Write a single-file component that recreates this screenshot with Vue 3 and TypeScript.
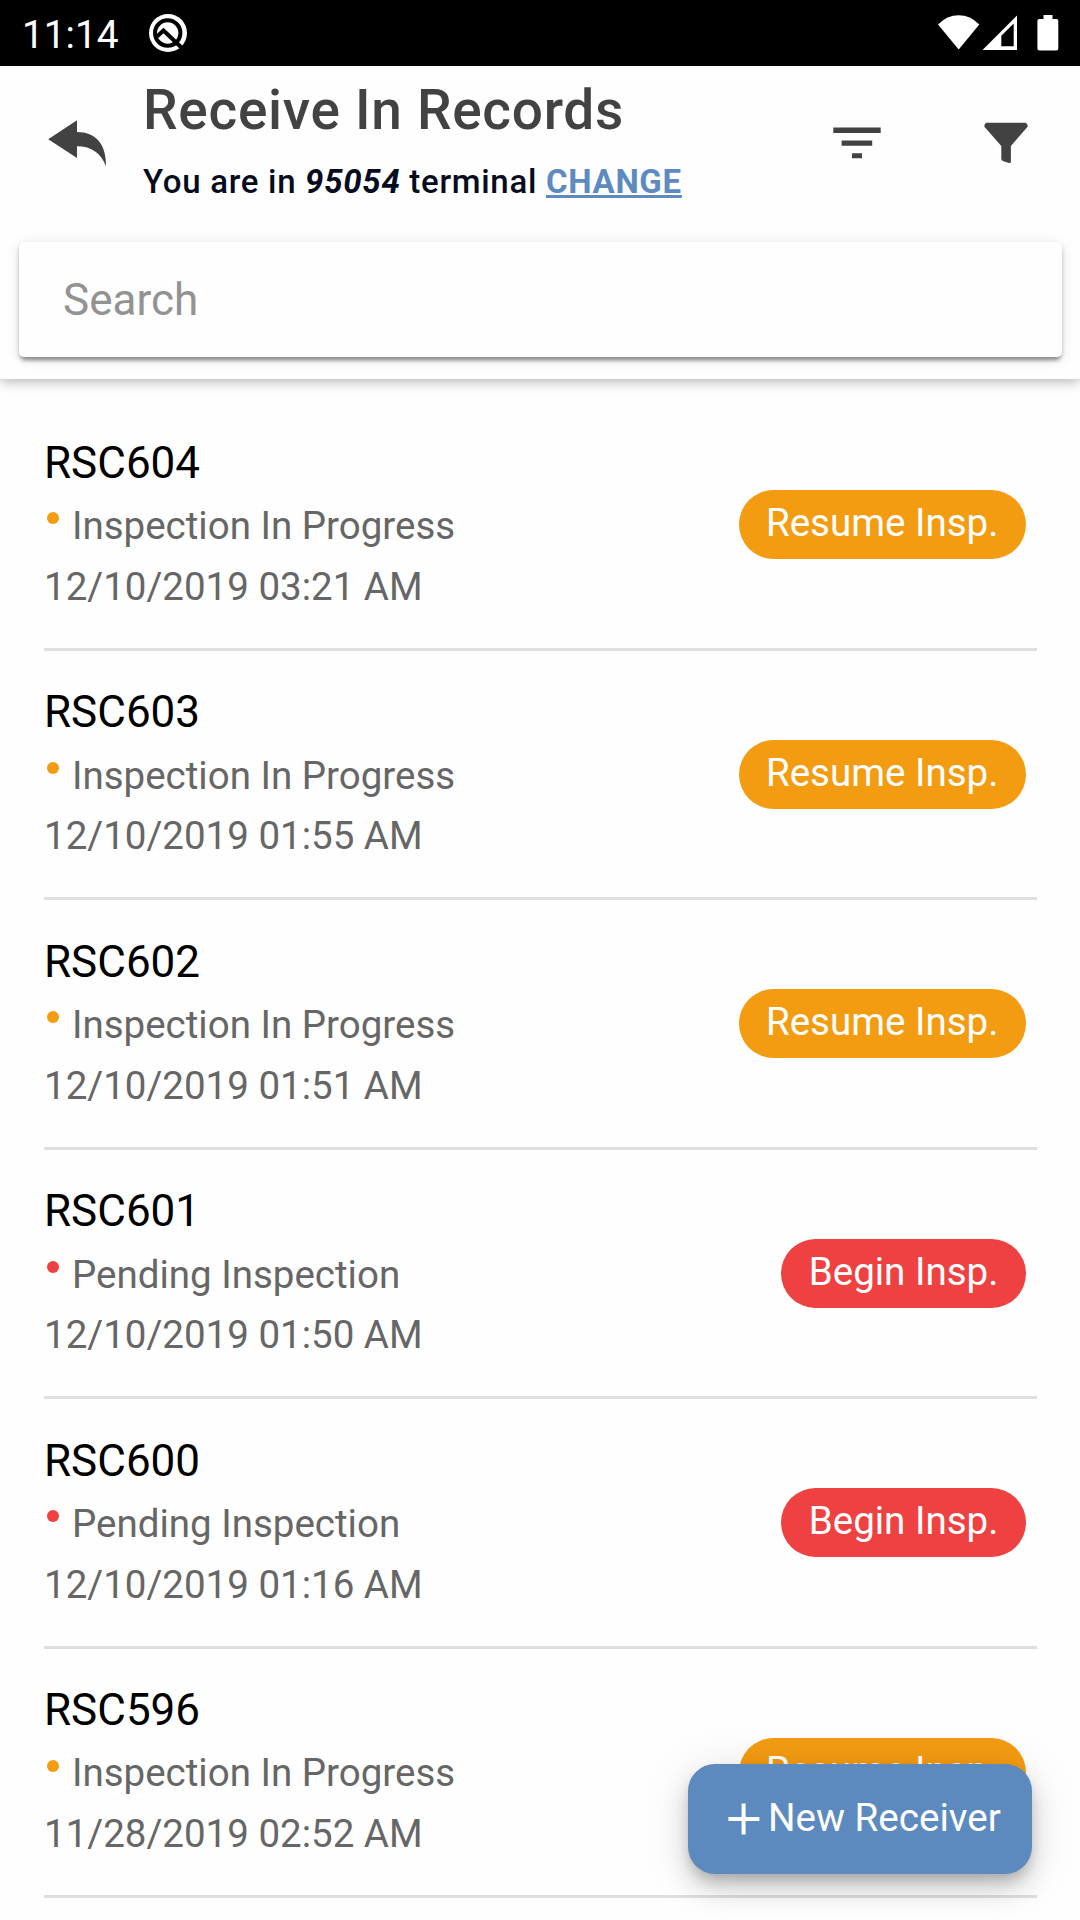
<script setup lang="ts">
interface ReceiveRecord {
  id: string
  pending: boolean
  date: string
}

const records: ReceiveRecord[] = [
  { id: 'RSC604', pending: false, date: '12/10/2019 03:21 AM' },
  { id: 'RSC603', pending: false, date: '12/10/2019 01:55 AM' },
  { id: 'RSC602', pending: false, date: '12/10/2019 01:51 AM' },
  { id: 'RSC601', pending: true, date: '12/10/2019 01:50 AM' },
  { id: 'RSC600', pending: true, date: '12/10/2019 01:16 AM' },
  { id: 'RSC596', pending: false, date: '11/28/2019 02:52 AM' },
]
</script>

<template>
  <div class="screen">
    <div class="statusbar">
      <span class="clock">11:14</span>
      <svg class="q-icon" width="40" height="40" viewBox="0 0 40 40">
        <circle cx="20" cy="20" r="19" fill="#fff" />
        <circle cx="19.7" cy="20" r="12.7" fill="none" stroke="#000" stroke-width="4" />
        <path d="M9 23.500l6.500-6 19.500 18.500" fill="none" stroke="#000" stroke-width="4" />
      </svg>
      <span class="spacer"></span>
      <svg class="wifi" width="42" height="35" viewBox="0 0 42 35">
        <path d="M0 9.500Q9 .3 20.700 .3T41.300 9.500L20.700 34.500Z" fill="#fff" />
      </svg>
      <svg class="signal" width="36" height="36" viewBox="0 0 36 36">
        <path d="M35 .5V35H.5ZM31.700 8.500L19.300 20.800V31.300H31.700Z" fill="#fff" fill-rule="evenodd" />
      </svg>
      <svg class="battery" width="22" height="36" viewBox="0 0 22 36">
        <path d="M6.500 0h9v4H19.500Q21.300 4 21.300 6V33.500Q21.300 35.600 19.300 35.600H2.500Q.4 35.600.4 33.500V6Q.4 4 2.400 4H6.500Z" fill="#fff" />
      </svg>
    </div>

    <header class="header">
      <div class="toolbar">
        <svg class="back" width="60" height="48" viewBox="0 0 60 48">
          <path d="M.2 19.300L29 .3V12.100C47.700 12.100 58.300 24 58 46.200C53.200 33.500 43.700 26.300 29 26.300V38Z" fill="#424242" />
        </svg>
        <div class="titles">
          <h1 class="title">Receive In Records</h1>
          <p class="subtitle">You are in <em>95054</em> terminal <a class="change">CHANGE</a></p>
        </div>
        <svg class="sort" width="48" height="32" viewBox="0 0 48 32">
          <path d="M.3.600h47.400v5.300H.3ZM8.600 13.400h30.600v5.300H8.600ZM19 26.200h10v5H19Z" fill="#424242" />
        </svg>
        <svg class="funnel" width="44" height="42" viewBox="0 0 44 42">
          <path d="M2.500.7H41.500Q44 1.700 43.600 4.700L26.900 24V40.200Q26.500 41.200 25 40.900L18.800 38.900Q17.300 38.200 17.300 36.700V24L.4 4.700Q0 1.700 2.500.7Z" fill="#424242" />
        </svg>
      </div>
      <div class="search">Search</div>
    </header>

    <main class="list">
      <div v-for="r in records" :key="r.id" class="row">
        <div class="info">
          <div class="name">{{ r.id }}</div>
          <div class="status">
            <span class="dot" :class="{ red: r.pending }"></span>
            <span>{{ r.pending ? 'Pending Inspection' : 'Inspection In Progress' }}</span>
          </div>
          <div class="date">{{ r.date }}</div>
        </div>
        <div class="chip" :class="{ red: r.pending }">{{ r.pending ? 'Begin Insp.' : 'Resume Insp.' }}</div>
      </div>
    </main>

    <div class="fab">
      <svg width="32" height="32" viewBox="0 0 32 32">
        <path d="M13.600.5h4v13.600H31.400v4H17.600V31.500h-4V18.100H.4v-4H13.600Z" fill="#fff" />
      </svg>
      <span>New Receiver</span>
    </div>
  </div>
</template>

<style>
html,
body {
  margin: 0;
  background: #fefefe;
  overflow: hidden;
}
</style>

<style scoped>
.screen {
  position: relative;
  width: 1080px;
  height: 1920px;
  overflow: hidden;
  background: #fefefe;
  font-family: Roboto, 'Liberation Sans', sans-serif;
  white-space: nowrap;
}
.statusbar {
  height: 66px;
  box-sizing: border-box;
  padding: 0 21px 0 22px;
  background: #000;
  color: #fff;
  display: flex;
  align-items: flex-start;
}
.clock {
  width: 126.300px;
  font-size: 38.800px;
  line-height: 70px;
}
.q-icon {
  margin-top: 13px;
}
.spacer {
  flex: 1;
}
.wifi {
  margin: 15px 2px 0 0;
}
.signal {
  margin: 15px 19px 0 0;
}
.battery {
  margin-top: 15px;
}
.header {
  position: relative;
  height: 313px;
  background: #fefefe;
  box-shadow: 0 2px 12px rgba(0, 0, 0, 0.32);
  clip-path: inset(0 0 -16px 0);
}
.toolbar {
  height: 176px;
  display: flex;
  align-items: flex-start;
}
.back {
  margin: 54px 0 0 48px;
}
.titles {
  width: 690px;
  margin-left: 35px;
}
.title {
  margin: 0;
  font-size: 55px;
  line-height: 88px;
  font-weight: 500;
  letter-spacing: 0.700px;
  color: #424242;
}
.subtitle {
  margin: 0;
  font-size: 33px;
  line-height: 56px;
  font-weight: 500;
  letter-spacing: 0.700px;
  color: #060c1e;
}
.subtitle em {
  font-weight: 700;
}
.change {
  color: #5d8abf;
  font-weight: 700;
  text-decoration: underline;
  text-decoration-thickness: 3px;
  text-underline-offset: 2px;
}
.sort {
  margin-top: 61px;
}
.funnel {
  margin: 56px 0 0 103px;
}
.search {
  height: 115px;
  margin: 0 18px 0 19px;
  padding-left: 44px;
  border-radius: 5px;
  background: #fefefe;
  color: #929292;
  font-size: 44px;
  line-height: 117px;
  box-sizing: border-box;
  box-shadow: 0 6px 4px -3px rgba(0, 0, 0, 0.3), 0 3px 4px rgba(0, 0, 0, 0.2), 0 2px 14px rgba(0, 0, 0, 0.1);
}
.list {
  padding: 22.500px 43px 0 44px;
}
.row {
  display: flex;
  justify-content: space-between;
  box-sizing: border-box;
  height: 249.450px;
  padding: 31.500px 11px 0 0;
  border-bottom: 3px solid #dfdfdf;
}
.name {
  font-size: 44px;
  line-height: 60px;
  color: #000;
}
.status {
  display: flex;
  margin-top: 2.200px;
  font-size: 38.500px;
  line-height: 61.300px;
  color: #666;
}
.dot {
  width: 12px;
  height: 12px;
  margin: 17.200px 12.700px 0 3.300px;
  border-radius: 50%;
  background: #f39c12;
}
.date {
  margin-top: 0.300px;
  font-size: 38.500px;
  line-height: 60.500px;
  color: #666;
}
.chip {
  height: 69px;
  margin-top: 57.400px;
  padding: 0 27.700px 0 27.300px;
  border-radius: 34.500px;
  background: #f39c12;
  color: #fff;
  font-size: 38.500px;
  line-height: 65px;
}
.dot.red,
.chip.red {
  background: #ef4141;
}
.fab {
  position: absolute;
  left: 688px;
  top: 1764px;
  width: 344px;
  height: 110px;
  box-sizing: border-box;
  padding-left: 39.500px;
  border-radius: 27px;
  background: #5c8abf;
  color: #fff;
  display: flex;
  align-items: center;
  font-size: 38.600px;
  line-height: 106px;
  box-shadow: 0 8px 14px -3px rgba(0, 0, 0, 0.22), 0 16px 28px rgba(0, 0, 0, 0.13), 0 5px 50px rgba(0, 0, 0, 0.1);
}
.fab span {
  margin: -2px 0 0 8.500px;
}
</style>
